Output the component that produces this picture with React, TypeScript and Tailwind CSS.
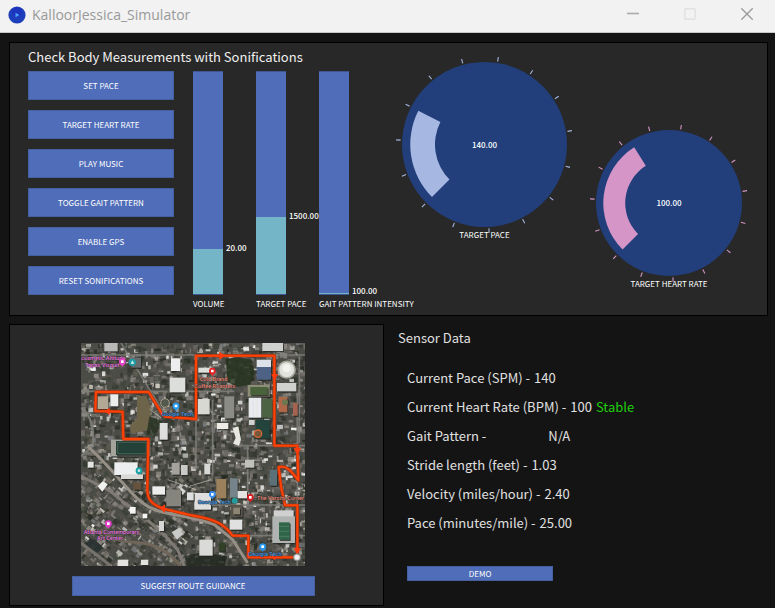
import { useState } from "react";
import type { ReactNode } from "react";

const BUTTONS = [
  "SET PACE",
  "TARGET HEART RATE",
  "PLAY MUSIC",
  "TOGGLE GAIT PATTERN",
  "ENABLE GPS",
  "RESET SONIFICATIONS",
];

const SENSORS = [
  { label: "Current Pace (SPM) -", value: "140" },
  { label: "Current Heart Rate (BPM) -", value: "100", status: "Stable" },
  { label: "Gait Pattern -", value: "N/A", wide: true },
  { label: "Stride length (feet) -", value: "1.03" },
  { label: "Velocity (miles/hour) -", value: "2.40" },
  { label: "Pace (minutes/mile) -", value: "25.00" },
];

function PanelButton({ children, className }: { children: ReactNode; className: string }) {
  return (
    <button
      type="button"
      className={`flex items-center justify-center border border-[#45609f] bg-[#506db9] text-[8px] leading-none text-white ${className}`}
    >
      {children}
    </button>
  );
}

function VerticalSlider({ id, label, initial, min, max }: { id: string; label: string; initial: number; min: number; max: number }) {
  const [value, setValue] = useState(initial);
  const fill = Math.max(1, Math.round(((value - min) / (max - min)) * 224));
  return (
    <div className="flex w-[63px] flex-col">
      <div className="relative flex">
        <input
          id={id}
          type="range"
          min={min}
          max={max}
          value={value}
          onChange={(e) => setValue(Number(e.target.value))}
          className="h-[224px] w-[30px] appearance-none border-x border-[#3f5790] [direction:rtl] [writing-mode:vertical-lr] [&::-webkit-slider-thumb]:appearance-none [&::-webkit-slider-thumb]:opacity-0"
          style={{ background: `linear-gradient(to top, #74b6c8 ${fill}px, #506db9 ${fill}px)` }}
        />
        <output
          htmlFor={id}
          className="absolute left-[33px] translate-y-1/2 text-[8px] leading-none font-medium text-white"
          style={{ bottom: Math.max(4, fill + 2) }}
        >
          {value.toFixed(2)}
        </output>
      </div>
      <label htmlFor={id} className="mt-1 text-[8px] leading-[10px] whitespace-nowrap text-white">
        {label}
      </label>
    </div>
  );
}

function polar(c: number, r: number, deg: number) {
  const a = (deg * Math.PI) / 180;
  return [c + r * Math.cos(a), c + r * Math.sin(a)];
}

function Knob({ id, label, value, radius, sweep, color, size }: { id: string; label: string; value: number; radius: number; sweep: number; color: string; size: string }) {
  const c = radius + 6;
  const outer = radius * 0.9;
  const inner = radius * 0.6;
  const [x1, y1] = polar(c, outer, 135);
  const [x2, y2] = polar(c, outer, 135 + sweep);
  const [x3, y3] = polar(c, inner, 135 + sweep);
  const [x4, y4] = polar(c, inner, 135);
  return (
    <div className="flex flex-col items-center">
      <div className={`relative flex items-center justify-center ${size}`}>
        <svg viewBox={`0 0 ${c * 2} ${c * 2}`} className="size-full" aria-hidden="true">
          <circle cx={c} cy={c} r={radius} fill="#223f7b" />
          <path d={`M${x1} ${y1}A${outer} ${outer} 0 0 1 ${x2} ${y2}L${x3} ${y3}A${inner} ${inner} 0 0 0 ${x4} ${y4}Z`} fill={color} />
          {Array.from({ length: 15 }, (_, i) => {
            const [ax, ay] = polar(c, radius + 1.5, 135 + i * 24);
            const [bx, by] = polar(c, radius + 6, 135 + i * 24);
            return <line key={i} x1={ax} y1={ay} x2={bx} y2={by} stroke={color} strokeWidth="1.1" />;
          })}
        </svg>
        <output htmlFor={id} className="absolute text-[8px] leading-none font-medium text-white">
          {value.toFixed(2)}
        </output>
        <input id={id} type="range" min="0" max="300" defaultValue={value} className="absolute inset-0 size-full opacity-0" />
      </div>
      <label htmlFor={id} className="-mt-1 text-[8px] leading-[12px] text-white">
        {label}
      </label>
    </div>
  );
}

/* Aerial map, drawn on a 672 x 669 grid */

function makeRandom(seed: number) {
  let s = seed;
  return () => {
    s = (s * 1664525 + 1013904223) % 4294967296;
    return s / 4294967296;
  };
}

const GROUND = ["#2d3129", "#3a3d33", "#504f49", "#605d58", "#706c66", "#8a857f", "#262b22", "#40463a", "#645f56", "#9b958d", "#33382f", "#54534e"];
const ROOFS = ["#c2c1bc", "#e2e2e0", "#a5a19a", "#8b8780", "#7d7972", "#cbc7be", "#f0f1f1", "#777a7d"];

function buildTexture() {
  const rnd = makeRandom(91);
  const items = [];
  for (let i = 0; i < 3600; i++) {
    const roof = rnd() < 0.2;
    const set = roof ? ROOFS : GROUND;
    const w = roof ? 4 + rnd() * 14 : 4 + rnd() * 15;
    const h = roof ? 4 + rnd() * 11 : 4 + rnd() * 14;
    const x = rnd() * 672;
    const y = rnd() * 669;
    const fill = set[Math.floor(rnd() * set.length)];
    const turn = x < 330 && y > 390 ? 38 : 0;
    items.push({ x, y, w, h, fill, turn, o: (roof ? 0.6 : 0.5) + rnd() * 0.4 });
  }
  return items;
}

const TEXTURE = buildTexture();

// x, y, width, height, colour
const AREAS: [number, number, number, number, string][] = [
  [70, 0, 40, 25, "#b9bab8"], [270, 46, 28, 38, "#ecedec"], [266, 104, 47, 44, "#dcdedc"], [88, 154, 24, 36, "#eceeee"],
  [50, 160, 32, 38, "#b3a893"], [90, 290, 118, 50, "#a3a59d"],
  [105, 294, 96, 42, "#244138"], [236, 240, 24, 50, "#dedfdd"], [152, 44, 28, 30, "#656a6c"],
  [527, 50, 43, 24, "#dde1e8"], [527, 72, 43, 38, "#4d6285"], [500, 126, 66, 35, "#8c8d75"],
  [508, 132, 52, 24, "#49623b"], [503, 164, 38, 60, "#e8eaed"], [543, 168, 32, 56, "#4b6243"], [524, 230, 42, 56, "#22443d"],
  [593, 162, 26, 46, "#ae6748"], [588, 120, 58, 25, "#cfd1cf"], [636, 180, 14, 38, "#a66350"], [544, 0, 62, 24, "#cfd1ce"],
  [430, 160, 30, 66, "#8c8c86"], [350, 168, 36, 46, "#d8d8d3"], [408, 240, 34, 18, "#ecebe6"], [352, 74, 42, 15, "#dedfda"],
  [340, 450, 50, 50, "#dedede"], [406, 408, 30, 58, "#9a815b"], [447, 406, 23, 58, "#75838a"], [448, 486, 37, 36, "#57534a"],
  [457, 494, 20, 20, "#8b8574"], [578, 502, 60, 20, "#cfd0cf"], [574, 520, 68, 80, "#b0b3b1"], [594, 538, 32, 52, "#2f6649"],
  [566, 380, 22, 48, "#5c7077"], [446, 530, 38, 30, "#dfe0df"], [355, 590, 40, 48, "#dadbd9"], [370, 362, 18, 32, "#d9d9d5"],
  [492, 350, 28, 24, "#c1c1bb"], [414, 600, 18, 24, "#324028"], [100, 358, 70, 38, "#eceeef"], [120, 394, 66, 14, "#d9d9d7"],
  [157, 418, 24, 22, "#66523d"], [214, 430, 38, 25, "#ecedec"], [256, 440, 44, 50, "#86857d"], [318, 448, 20, 24, "#dedfdf"],
  [147, 492, 17, 20, "#f4f4f3"], [185, 512, 14, 14, "#f4f4f2"], [234, 534, 15, 30, "#d6d7d5"], [20, 356, 18, 18, "#e5e6e4"],
  [110, 650, 32, 19, "#e4e2df"], [272, 360, 24, 35, "#a4a29b"], [180, 650, 22, 16, "#e2e2df"], [300, 366, 20, 30, "#c9c9c7"],
  [470, 444, 28, 22, "#e4e5e3"],
];

const ROUTE =
  "M345 38H580V308H649L652 412C632 386 618 366 593 372L600 430L612 487H649V643H502V578H455C430 545 410 530 327 516L250 498C215 486 197 472 199 434L202 288H127L125 206L43 204L45 147H203L242 211L252 221L345 228Z";

function Pin({ x, y, color }: { x: number; y: number; color: string }) {
  return (
    <g>
      <path d={`M${x - 9} ${y + 3}L${x} ${y + 15}L${x + 9} ${y + 3}Z`} fill={color} />
      <circle cx={x} cy={y} r="10" fill={color} />
      <rect x={x - 4} y={y - 4} width="8" height="8" rx="1" fill="#fff" />
    </g>
  );
}

function RouteMap() {
  return (
    <svg viewBox="0 0 672 669" role="img" aria-label="Satellite map with the suggested route" className="h-[223px] w-[224px]" fontFamily="Roboto, sans-serif" fontWeight="500">
      <rect width="672" height="669" fill="#4b4c46" />
      {TEXTURE.map((t, i) => (
        <rect key={i} x={t.x} y={t.y} width={t.w} height={t.h} fill={t.fill} opacity={t.o} transform={t.turn ? `rotate(${t.turn} ${t.x} ${t.y})` : undefined} />
      ))}
      {/* woods, lawns and dark roofs */}
      <path d="M434 48L470 42L512 50L522 90L508 124L470 132L440 118Z" fill="#26331f" opacity=".85" />
      <path d="M168 160L196 158L212 200L200 262L150 272L146 250L168 225Z" fill="#6d6449" />
      <path d="M205 220L245 235L220 285L196 275Z" fill="#2b3524" opacity=".8" />
      <path d="M310 640L350 630L440 640L430 669H320Z" fill="#20281f" opacity=".8" />
      <path d="M10 600L40 588L66 616L36 640Z" fill="#273130" opacity=".85" />
      {/* streets */}
      <g fill="none" stroke="#81807b" strokeWidth="5" opacity=".85">
        <path d="M0 36H672M0 145H260M345 38V380M580 0V308M300 145H460M120 0L160 65L252 215M460 308H672M395 170V400M500 308V486M340 486H672M649 150V669M500 578H672M655 40V300" />
        <path d="M0 195C30 210 42 270 34 310L0 340" strokeWidth="7" />
      </g>
      <g fill="none" stroke="#958f85" strokeWidth="9">
        <path d="M20 310C60 345 90 380 130 425C170 470 190 492 240 506C300 520 350 524 400 545L455 590L500 660" />
        <path d="M0 400C60 430 90 440 130 480C190 520 240 560 290 620L310 669" stroke="#7f7b74" />
        <path d="M60 560C110 610 160 590 210 606S270 640 300 669" stroke="#6f6659" />
        <path d="M0 600L90 669" stroke="#77736c" />
      </g>
      {AREAS.map(([x, y, w, h, fill], i) => (
        <g key={i}>
          <rect x={x + 3} y={y + 4} width={w} height={h} fill="#20231f" opacity=".75" />
          <rect x={x} y={y} width={w} height={h} fill={fill} />
        </g>
      ))}
      <g fill="none" stroke="#d5d2c8" strokeWidth="3" opacity=".6">
        <path d="M205 198L240 225M260 410L345 440M285 408V425M325 430L390 410" />
        <path d="M504 168V222M516 168V222M528 168V222M595 550H625M595 565H625M595 580H625M110 298H196V332H110Z" strokeWidth="1" />
      </g>
      <circle cx="252" cy="180" r="13" fill="#54594e" stroke="#a49e89" strokeWidth="3" />
      <circle cx="617" cy="80" r="25" fill="#e1e1dd" stroke="#a5a89d" strokeWidth="5" />
      <circle cx="617" cy="76" r="12" fill="#f4f4ef" />
      <circle cx="531" cy="272" r="11" fill="#75573c" stroke="#d76635" strokeWidth="4" />
      <circle cx="612" cy="178" r="9" fill="#6b784f" />
      <path d="M455 255L472 250L480 290L474 308L456 302L464 285Z" fill="#e8e8e1" />
      <path d="M50 430L66 414L80 424L64 446Z" fill="#f1f1ef" />
      <path d="M272 568L294 554L306 574L288 590Z" fill="#c8cac7" />

      {/* suggested route */}
      <g fill="none" strokeLinejoin="round">
        <path d={ROUTE} stroke="#a93312" strokeWidth="10" />
        <path d={ROUTE} stroke="#ff4206" strokeWidth="6" />
      </g>
      <g fill="#ff3a0c">
        <path d="M415 26L432 38L415 50ZM570 94H592L581 110ZM637 316L649 334L661 316ZM86 194V216L70 205ZM252 484L236 496L252 510ZM638 616H660L649 632ZM572 640L590 640L580 652Z" />
      </g>

      {/* places */}
      <g fontSize="17" stroke="#262626" strokeWidth="2" paintOrder="stroke">
        <g fill="#f07fe0">
          <text x="0" y="50">cosmetic Altitude</text>
          <text x="12" y="71">Tapas Visquit</text>
          <text x="8" y="572">Atlanta Contemporary</text>
          <text x="48" y="592">Art Center</text>
        </g>
        <g fill="#f08c78">
          <text x="356" y="114">Cold Brand</text>
          <text x="340" y="134">Coffee Roasters</text>
          <text x="528" y="470">The Varsity Corner</text>
        </g>
        <g fill="#459fec">
          <text x="242" y="220">Google Tech</text>
          <text x="350" y="482">Georgia Tech</text>
          <text x="502" y="640">Georgia Tech</text>
        </g>
      </g>
      <Pin x={124} y={56} color="#e843c7" />
      <circle cx="154" cy="58" r="11" fill="#1f9ba3" />
      <path d="M149 62L154 52L160 62Z" fill="#d7f5ef" />
      <Pin x={285} y={189} color="#249df3" />
      <Pin x={394} y={84} color="#e81f24" />
      <Pin x={394} y={454} color="#338df0" />
      <circle cx="461" cy="473" r="9" fill="#249c9d" />
      <Pin x={508} y={463} color="#dc1c20" />
      <Pin x={545} y={611} color="#2497f2" />
      <circle cx="174" cy="383" r="10" fill="#1aa2a7" />
      <circle cx="174" cy="383" r="4" fill="#c5eeeb" />
      <Pin x={82} y={542} color="#e63acb" />
      <circle cx="648" cy="643" r="11" fill="#d5d5d5" stroke="#74756f" strokeWidth="3" />
      <circle cx="648" cy="643" r="6" fill="#f6f6f6" />
    </svg>
  );
}

export default function App() {
  return (
    <div className="min-h-screen bg-[#141414] font-['Noto_Sans_CJK_SC','Noto_Sans',sans-serif]">
      <header className="flex h-[33px] items-center justify-between border-b border-[#c9c9c9] bg-[#f2f2f2] pl-2 font-['Open_Sans',sans-serif]">
        <div className="flex items-center gap-1.5 pb-0.5">
          <svg viewBox="0 0 18 18" className="size-[18px]" aria-hidden="true">
            <circle cx="9" cy="9" r="8.6" fill="#1e3fbb" />
            <circle cx="9" cy="6" r="5" fill="#1d2fc0" opacity=".6" />
            <path d="M7.5 6.8L11.4 9L7.5 11.2Z" fill="#4da5ff" />
          </svg>
          <h1 className="text-[14px] leading-5 text-[#999999]">KalloorJessica_Simulator</h1>
        </div>
        <div className="flex pb-1">
          <button type="button" aria-label="Minimize" className="flex h-7 w-[57px] items-center justify-center">
            <svg viewBox="0 0 12 12" className="size-3" aria-hidden="true"><path d="M0 5.5H12" stroke="#aaa" strokeWidth="1.6" /></svg>
          </button>
          <button type="button" aria-label="Maximize" className="flex h-7 w-[57px] items-center justify-center">
            <svg viewBox="0 0 12 12" className="size-3" aria-hidden="true"><rect x=".8" y=".8" width="10.4" height="10.4" rx="1" fill="none" stroke="#e0e0e0" strokeWidth="1.4" /></svg>
          </button>
          <button type="button" aria-label="Close" className="flex h-7 w-[57px] items-center justify-center">
            <svg viewBox="0 0 12 12" className="size-3" aria-hidden="true"><path d="M.3.3L11.7 11.7M11.7.3L.3 11.7" stroke="#999" strokeWidth="1.3" /></svg>
          </button>
        </div>
      </header>

      <main className="flex flex-col gap-2 py-[9px] pr-[7px] pl-[9px]">
        <section className="flex items-start border border-black bg-[#282828] pb-1.5 pl-[18px]">
          <div>
            <h2 className="pt-1 text-[13px] leading-5 text-[#f0f0f0]">Check Body Measurements with Sonifications</h2>
            <div className="mt-1 flex gap-[19px]">
              <div className="flex w-[146px] flex-col gap-2.5">
                {BUTTONS.map((b) => (
                  <PanelButton key={b} className="h-[29px] w-full">{b}</PanelButton>
                ))}
              </div>
              <div className="flex">
                <VerticalSlider id="volume" label="VOLUME" initial={20} min={0} max={100} />
                <VerticalSlider id="pace" label="TARGET PACE" initial={1500} min={980} max={2500} />
                <VerticalSlider id="intensity" label="GAIT PATTERN INTENSITY" initial={100} min={100} max={1000} />
              </div>
            </div>
          </div>
          <div className="ml-[14px] flex items-start gap-[17px] pt-[13px]">
            <Knob id="pace-knob" label="TARGET PACE" value={140} radius={82.5} sweep={72} color="#a6b7e1" size="size-[177px]" />
            <div className="pt-[68px]">
              <Knob id="heart-knob" label="TARGET HEART RATE" value={100} radius={73} sweep={103} color="#d595c7" size="size-[158px]" />
            </div>
          </div>
        </section>

        <div className="grid grid-cols-[375px_1fr] gap-[14px]">
          <section className="flex flex-col items-center gap-2.5 border border-black bg-[#282828] pt-[18px] pr-[7px] pb-[9px]">
            <RouteMap />
            <PanelButton className="h-5 w-[243px]">SUGGEST ROUTE GUIDANCE</PanelButton>
          </section>
          <section className="flex flex-col items-start pt-1">
            <h2 className="text-[13px] leading-5 text-[#e0e0e0]">Sensor Data</h2>
            <ul className="mt-[15px] ml-[9px] text-[13px] leading-[29px] text-[#e0e0e0]">
              {SENSORS.map((s) => (
                <li key={s.label} className="flex gap-1">
                  <span>{s.label}</span>
                  <span className={s.wide ? "ml-[58px]" : ""}>{s.value}</span>
                  {s.status && <span className="text-[#1fcf0c]">{s.status}</span>}
                </li>
              ))}
            </ul>
            <PanelButton className="mt-[29px] ml-[9px] h-[15px] w-[146px]">DEMO</PanelButton>
          </section>
        </div>
      </main>
    </div>
  );
}
